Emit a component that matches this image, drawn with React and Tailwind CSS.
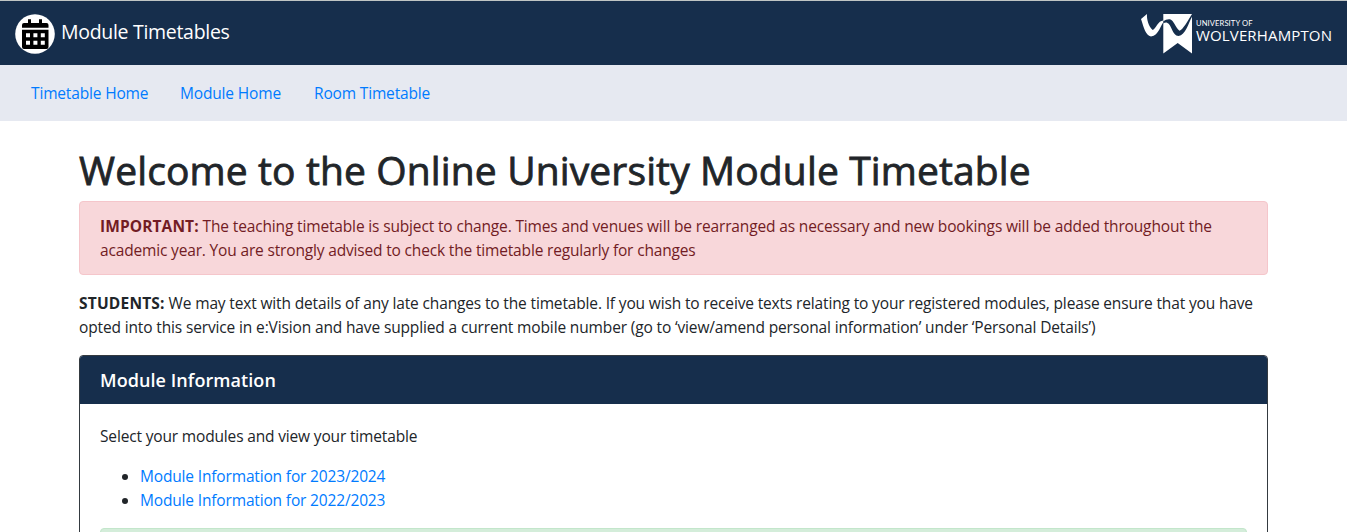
const CalendarIcon = () => (
  <svg width="40" height="40" viewBox="0 0 40 40" className="shrink-0" aria-hidden="true">
    <circle cx="20" cy="20" r="19.8" fill="#fff" />
    <path
      fill="#000"
      d="M7 13.700V11q0-2 2-2h4V5.300h3V9h8V5.300h3V9h4.500q2 0 2 2v2.700zM7 15.700h26.500V33q0 2-2 2H9q-2 0-2-2z"
    />
    <path
      fill="#fff"
      d="M11 19.200h4v4h-4zM18.400 19.200h4v4h-4zM25.800 19.200h4v4h-4zM11 26.700h4v4h-4zM18.400 26.700h4v4h-4zM25.800 26.700h4v4h-4z"
    />
  </svg>
);

const UniversityMark = () => (
  <svg width="52" height="42" viewBox="0 0 52 42" className="shrink-0" aria-hidden="true">
    <path
      fill="#fff"
      d="M6 0C5.500 5 7.500 12.500 11.700 16C15 14.500 17 6.700 22.300 6.500V8.700C20 9.500 18 21.800 10 22.400C4.500 21.500 3 14 0 5Z"
    />
    <path fill="#fff" d="M22.300 0H51V39.600L36.700 29L22.300 39.600Z" />
    <path
      fill="#162e4c"
      d="M22.300 7.300C24.500 5.800 26.500 4.900 29 5.300C33 6.700 34 13 38.500 16.700C42 15.500 46.500 7.500 51 0V2.800C47.500 9 44.500 21.500 37.500 22C31 21.700 31 10.500 26 8.700C24.500 8.400 23.300 8.900 22.300 9.500Z"
    />
  </svg>
);

const navItems = [
  { label: "Timetable Home", width: "w-[117px]" },
  { label: "Module Home", width: "w-[102px]" },
  { label: "Room Timetable", width: "w-[116px]" },
];

const years = ["2023/2024", "2022/2023"];

export default function App() {
  return (
    <div className="h-[532px] overflow-hidden bg-white font-['Open_Sans','Noto_Sans',sans-serif] text-[15.5px] leading-6 tracking-[-0.16px] text-[#212529]">
      <header className="flex h-[65px] items-start justify-between border-t border-[#c0c5c4] bg-[#162e4c] pt-[13px] pr-[14px] pl-[15px] text-white">
        <div className="flex items-center gap-[6px]">
          <CalendarIcon />
          <span className="whitespace-nowrap pb-[5px] text-[19.5px] tracking-[-0.3px]">Module Timetables</span>
        </div>
        <div className="flex items-start gap-[3px]">
          <UniversityMark />
          <div className="flex w-[137px] flex-col whitespace-nowrap pt-[4px]">
            <span className="font-['Lato',sans-serif] text-[7.600px] leading-[10px] tracking-[0.1px]">
              UNIVERSITY OF
            </span>
            <span className="h-[14px] text-[15px] leading-[14px] tracking-[0.15px]">WOLVERHAMPTON</span>
          </div>
        </div>
      </header>

      <nav className="flex h-14 items-center gap-8 bg-[#e6e9f1] pl-[31px] text-[#007bff]">
        {navItems.map((item) => (
          <a key={item.label} href="#" className={`${item.width} whitespace-nowrap`}>
            {item.label}
          </a>
        ))}
      </nav>

      <main className="mx-[79px] pt-[25px]">
        <h1 className="mb-[7px] whitespace-nowrap text-[39px] leading-[48px] tracking-[0.13px] [-webkit-text-stroke:0.8px_#212529]">
          Welcome to the Online University Module Timetable
        </h1>

        <div className="mb-4 rounded-[4px] border border-[#f5c6cb] bg-[#f8d7da] px-5 py-3 whitespace-nowrap text-[#721c24]">
          <p className="tracking-[-0.15px]">
            <strong className="font-bold tracking-[0.1px]">IMPORTANT:</strong> The teaching timetable is subject to
            change. Times and venues will be rearranged as necessary and new bookings will be added throughout the
          </p>
          <p className="tracking-[-0.165px]">
            academic year. You are strongly advised to check the timetable regularly for changes
          </p>
        </div>

        <div className="mb-4 whitespace-nowrap">
          <p className="tracking-[-0.15px]">
            <strong className="font-bold tracking-[0.2px]">STUDENTS:</strong> We may text with details of any late
            changes to the timetable. If you wish to receive texts relating to your registered modules, please ensure
            that you have
          </p>
          <p className="tracking-[-0.14px]">
            opted into this service in e:Vision and have supplied a current mobile number (go to ‘view/amend personal
            information’ under ‘Personal Details’)
          </p>
        </div>

        <section className="h-[300px] overflow-hidden rounded-[4px] border border-[#343a40]">
          <h2 className="h-12 bg-[#162e4c] px-5 text-[18px] leading-[48px] font-semibold tracking-[0.07px] text-white">
            Module Information
          </h2>
          <div className="p-5">
            <p className="mb-4">Select your modules and view your timetable</p>
            <ul className="mb-4 list-disc pl-10">
              {years.map((year) => (
                <li key={year}>
                  <a href="#" className="text-[#007bff]">
                    Module Information for {year}
                  </a>
                </li>
              ))}
            </ul>
            <div className="h-[74px] rounded-[4px] border border-[#c3e6cb] bg-[#d4edda]" />
          </div>
        </section>
      </main>
    </div>
  );
}
